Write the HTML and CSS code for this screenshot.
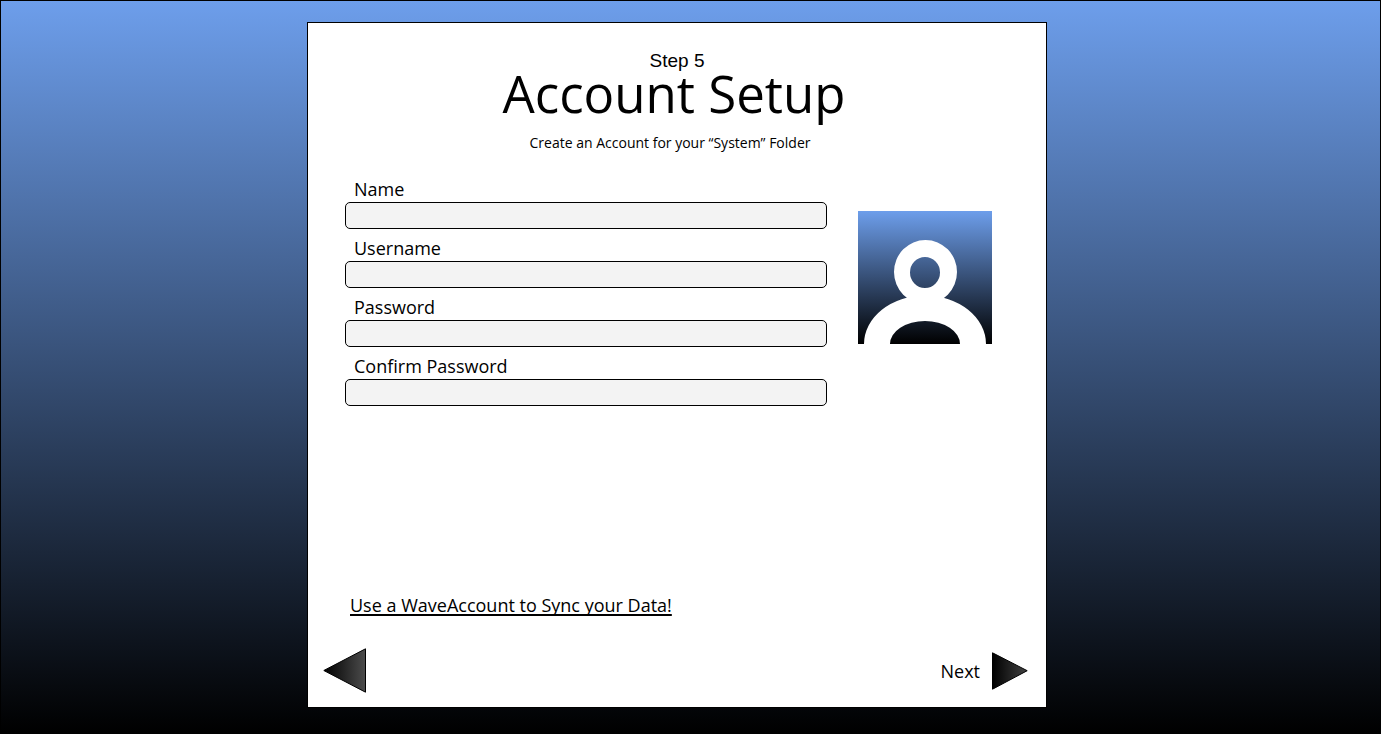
FILE: index.html
```html
<!DOCTYPE html>
<html lang="en">
<head>
<meta charset="utf-8">
<meta name="viewport" content="width=device-width, initial-scale=1">
<title>Account Setup</title>
<link rel="stylesheet" href="styles.css">
</head>
<body>
<div class="page">
  <main class="card">
    <header class="header">
      <p class="step">Step 5</p>
      <div class="heading">
        <h1 class="title">Account Setup</h1>
        <p class="subtitle">Create an Account for your “System” Folder</p>
      </div>
    </header>
    <form class="form" id="account">
      <div class="fields">
        <div class="field">
          <label class="label" for="name">Name</label>
          <input class="input" id="name" type="text">
        </div>
        <div class="field">
          <label class="label" for="username">Username</label>
          <input class="input" id="username" type="text">
        </div>
        <div class="field">
          <label class="label" for="password">Password</label>
          <input class="input" id="password" type="password">
        </div>
        <div class="field">
          <label class="label" for="confirm">Confirm Password</label>
          <input class="input" id="confirm" type="password">
        </div>
      </div>
      <svg class="avatar" viewBox="0 0 134 133" role="img" aria-label="Profile picture">
        <defs>
          <linearGradient id="sky" x1="0" y1="0" x2="0" y2="1">
            <stop offset="0" stop-color="#6d9eeb"/>
            <stop offset="1" stop-color="#000"/>
          </linearGradient>
        </defs>
        <rect width="134" height="133" fill="url(#sky)"/>
        <path fill="#fff" fill-rule="evenodd" d="M6 133A61 48.5 0 0 1 128 133H102A35 23 0 0 0 32 133Z"/>
        <path fill="#fff" fill-rule="evenodd" d="M36 61a31.5 32 0 0 1 63 0a31.5 32 0 0 1 -63 0ZM52 61.500a15 15.500 0 0 0 30 0a15 15.500 0 0 0 -30 0Z"/>
      </svg>
    </form>
    <a class="sync" href="#sync">Use a WaveAccount to Sync your Data!</a>
    <nav class="nav">
      <button class="button" type="button" aria-label="Back">
        <svg class="back" viewBox="0 0 43 45" aria-hidden="true">
          <defs>
            <linearGradient id="shade-back">
              <stop offset="0" stop-color="#000"/>
              <stop offset="1" stop-color="#4c4c4c"/>
            </linearGradient>
          </defs>
          <path d="M.8 22.500L42.500 .8V44.200Z" fill="url(#shade-back)" stroke="#000"/>
        </svg>
      </button>
      <button class="button" type="submit" form="account">
        <span>Next</span>
        <svg class="next" viewBox="0 0 36 38" aria-hidden="true">
          <defs>
            <linearGradient id="shade-next">
              <stop offset="0" stop-color="#000"/>
              <stop offset="1" stop-color="#434343"/>
            </linearGradient>
          </defs>
          <path d="M.5 .8V37.200L35.200 18.700Z" fill="url(#shade-next)" stroke="#000"/>
        </svg>
      </button>
    </nav>
  </main>
</div>
</body>
</html>
```
FILE: styles.css
```css
* {
  box-sizing: border-box;
}

body {
  margin: 0;
  color: #000;
  font-family: "Open Sans", "Noto Sans", sans-serif;
  font-size: 18px;
}

.page {
  display: grid;
  grid-template-columns: 306fr 740fr 333fr;
  min-height: 100vh;
  padding: 21px 0 25px;
  border: 1px solid #000;
  background: linear-gradient(#6d9eeb, #000);
}

.card {
  grid-column: 2;
  display: flex;
  flex-direction: column;
  border: 1px solid #000;
  background: #fff;
}

.header {
  padding-top: 29px;
  text-align: center;
}

.step {
  margin: 0;
  font-family: "Liberation Sans", Arial, sans-serif;
  font-size: 19px;
  line-height: 18px;
}

.heading {
  padding-right: 6px;
}

.title {
  margin: 0;
  font-size: 51px;
  font-weight: 400;
  line-height: 46px;
}

.subtitle {
  margin: 17px 0 0;
  padding-right: 8px;
  font-size: 14px;
  line-height: 20px;
}

.form {
  display: flex;
  gap: 31px;
  padding: 25px 54px 24px 37px;
}

.fields {
  display: flex;
  flex: 1;
  flex-direction: column;
  gap: 8px;
}

.field {
  display: flex;
  flex-direction: column;
  gap: 2px;
}

.label {
  padding-left: 9px;
  line-height: 22px;
}

.input {
  width: 100%;
  height: 27px;
  padding: 0 8px;
  border: 1px solid #000;
  border-radius: 5px;
  background: #f3f3f3;
  font: inherit;
}

.avatar {
  flex: none;
  width: 134px;
  height: 133px;
  margin-top: 33px;
}

.sync {
  align-self: flex-start;
  margin: auto 0 31px 42px;
  color: #000;
  line-height: 24px;
  text-decoration-thickness: 2px;
  text-decoration-skip-ink: none;
  text-underline-offset: 2px;
}

.nav {
  display: flex;
  align-items: center;
  justify-content: space-between;
  padding: 0 18px 14px 15px;
}

.button {
  display: flex;
  align-items: center;
  gap: 12px;
  padding: 0;
  border: 0;
  background: none;
  color: #000;
  font: inherit;
  cursor: pointer;
}

.back {
  width: 43px;
  height: 45px;
}

.next {
  width: 36px;
  height: 38px;
}
```
